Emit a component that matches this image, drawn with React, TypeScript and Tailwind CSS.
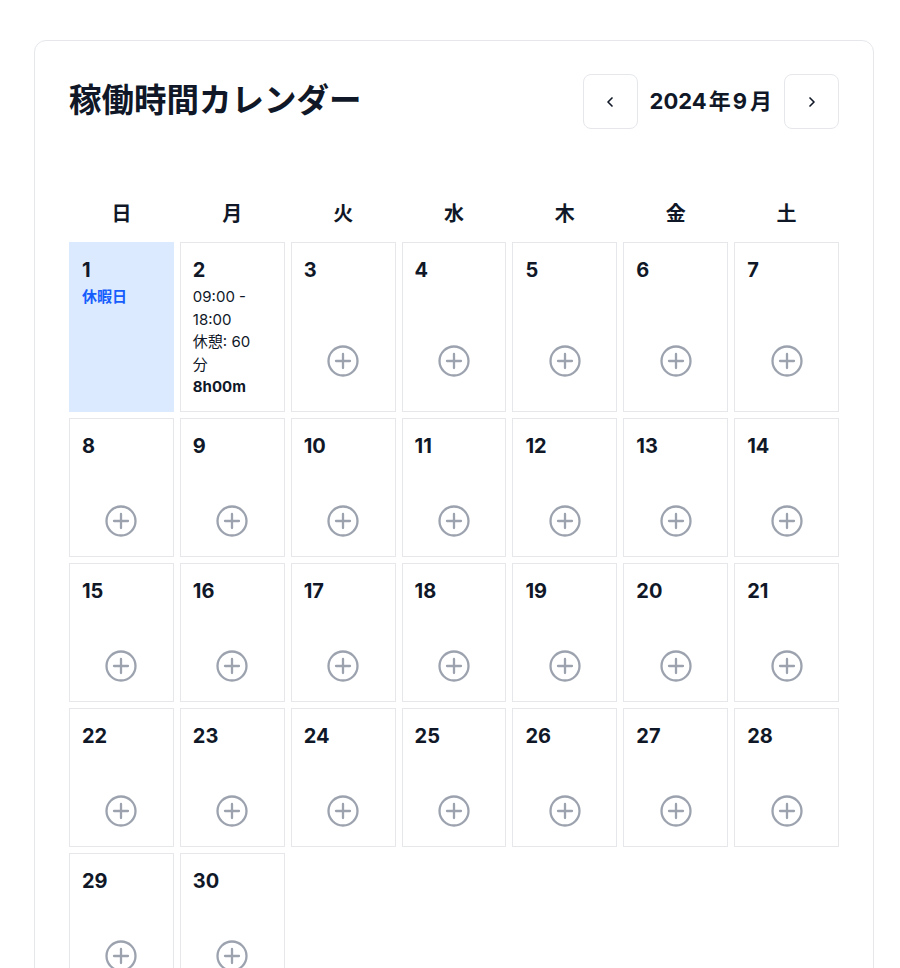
import React from "react";

const weekdays = ["日", "月", "火", "水", "木", "金", "土"];

function PlusIcon() {
  return (
    <svg width="32" height="32" viewBox="0 0 32 32" fill="none" stroke="#9ca3af" strokeWidth="2.3" strokeLinecap="round">
      <circle cx="16" cy="16" r="14.5" />
      <line x1="16" y1="9" x2="16" y2="23" />
      <line x1="9" y1="16" x2="23" y2="16" />
    </svg>
  );
}

function Chevron({ dir }: { dir: "left" | "right" }) {
  return (
    <svg width="16" height="16" viewBox="0 0 24 24" fill="none" stroke="#111827" strokeWidth="2.5" strokeLinecap="round" strokeLinejoin="round">
      {dir === "left" ? <path d="M15 18l-6-6 6-6" /> : <path d="M9 18l6-6-6-6" />}
    </svg>
  );
}

export default function App() {
  const days = Array.from({ length: 30 }, (_, i) => i + 1);
  return (
    <div className="min-h-screen bg-white pl-[34px] pt-[40px] font-['Inter','Noto_Sans_CJK_JP',sans-serif] text-gray-900">
      <div className="w-[840px] rounded-xl border border-gray-200 bg-white px-[34px] pt-[33px] pb-8">
        <div className="flex items-center justify-between">
          <h1 className="text-[32.5px] font-bold leading-none">稼働時間カレンダー</h1>
          <div className="flex items-center gap-3">
            <button className="flex h-[55px] w-[55px] items-center justify-center rounded-lg border border-gray-200 bg-white">
              <Chevron dir="left" />
            </button>
            <span className="text-[22px] font-bold">2024<span className="mx-[2px]">年</span>9<span className="ml-[3px]">月</span></span>
            <button className="flex h-[55px] w-[55px] items-center justify-center rounded-lg border border-gray-200 bg-white">
              <Chevron dir="right" />
            </button>
          </div>
        </div>
        <div className="mt-[63px] grid grid-cols-7 gap-[6px]">
          {weekdays.map((w) => (
            <div key={w} className="py-2 text-center text-xl font-bold leading-7">
              {w}
            </div>
          ))}
          {days.map((d) => {
            if (d === 1) {
              return (
                <div key={d} className="flex min-h-[139px] flex-col border border-blue-100 bg-blue-100 p-3">
                  <div className="pt-[2px] text-xl font-bold leading-[26px]">{d}</div>
                  <div className="mt-[3px] text-[15px] font-semibold leading-[1.5] text-blue-600">休暇日</div>
                </div>
              );
            }
            if (d === 2) {
              return (
                <div key={d} className="flex min-h-[139px] flex-col border border-gray-200 bg-white p-3">
                  <div className="pt-[2px] text-xl font-bold leading-[26px]">{d}</div>
                  <div className="mt-[3px] text-[15px] leading-[1.5] text-gray-900">
                    <div>09:00 -</div>
                    <div>18:00</div>
                    <div>休憩: 60</div>
                    <div>分</div>
                    <div className="font-bold">8h00m</div>
                  </div>
                </div>
              );
            }
            return (
              <div key={d} className="flex min-h-[139px] flex-col border border-gray-200 bg-white p-3">
                <div className="pt-[2px] text-xl font-bold leading-[26px]">{d}</div>
                <div className="flex flex-1 items-center justify-center pt-[40px]">
                  <PlusIcon />
                </div>
              </div>
            );
          })}
        </div>
      </div>
    </div>
  );
}
